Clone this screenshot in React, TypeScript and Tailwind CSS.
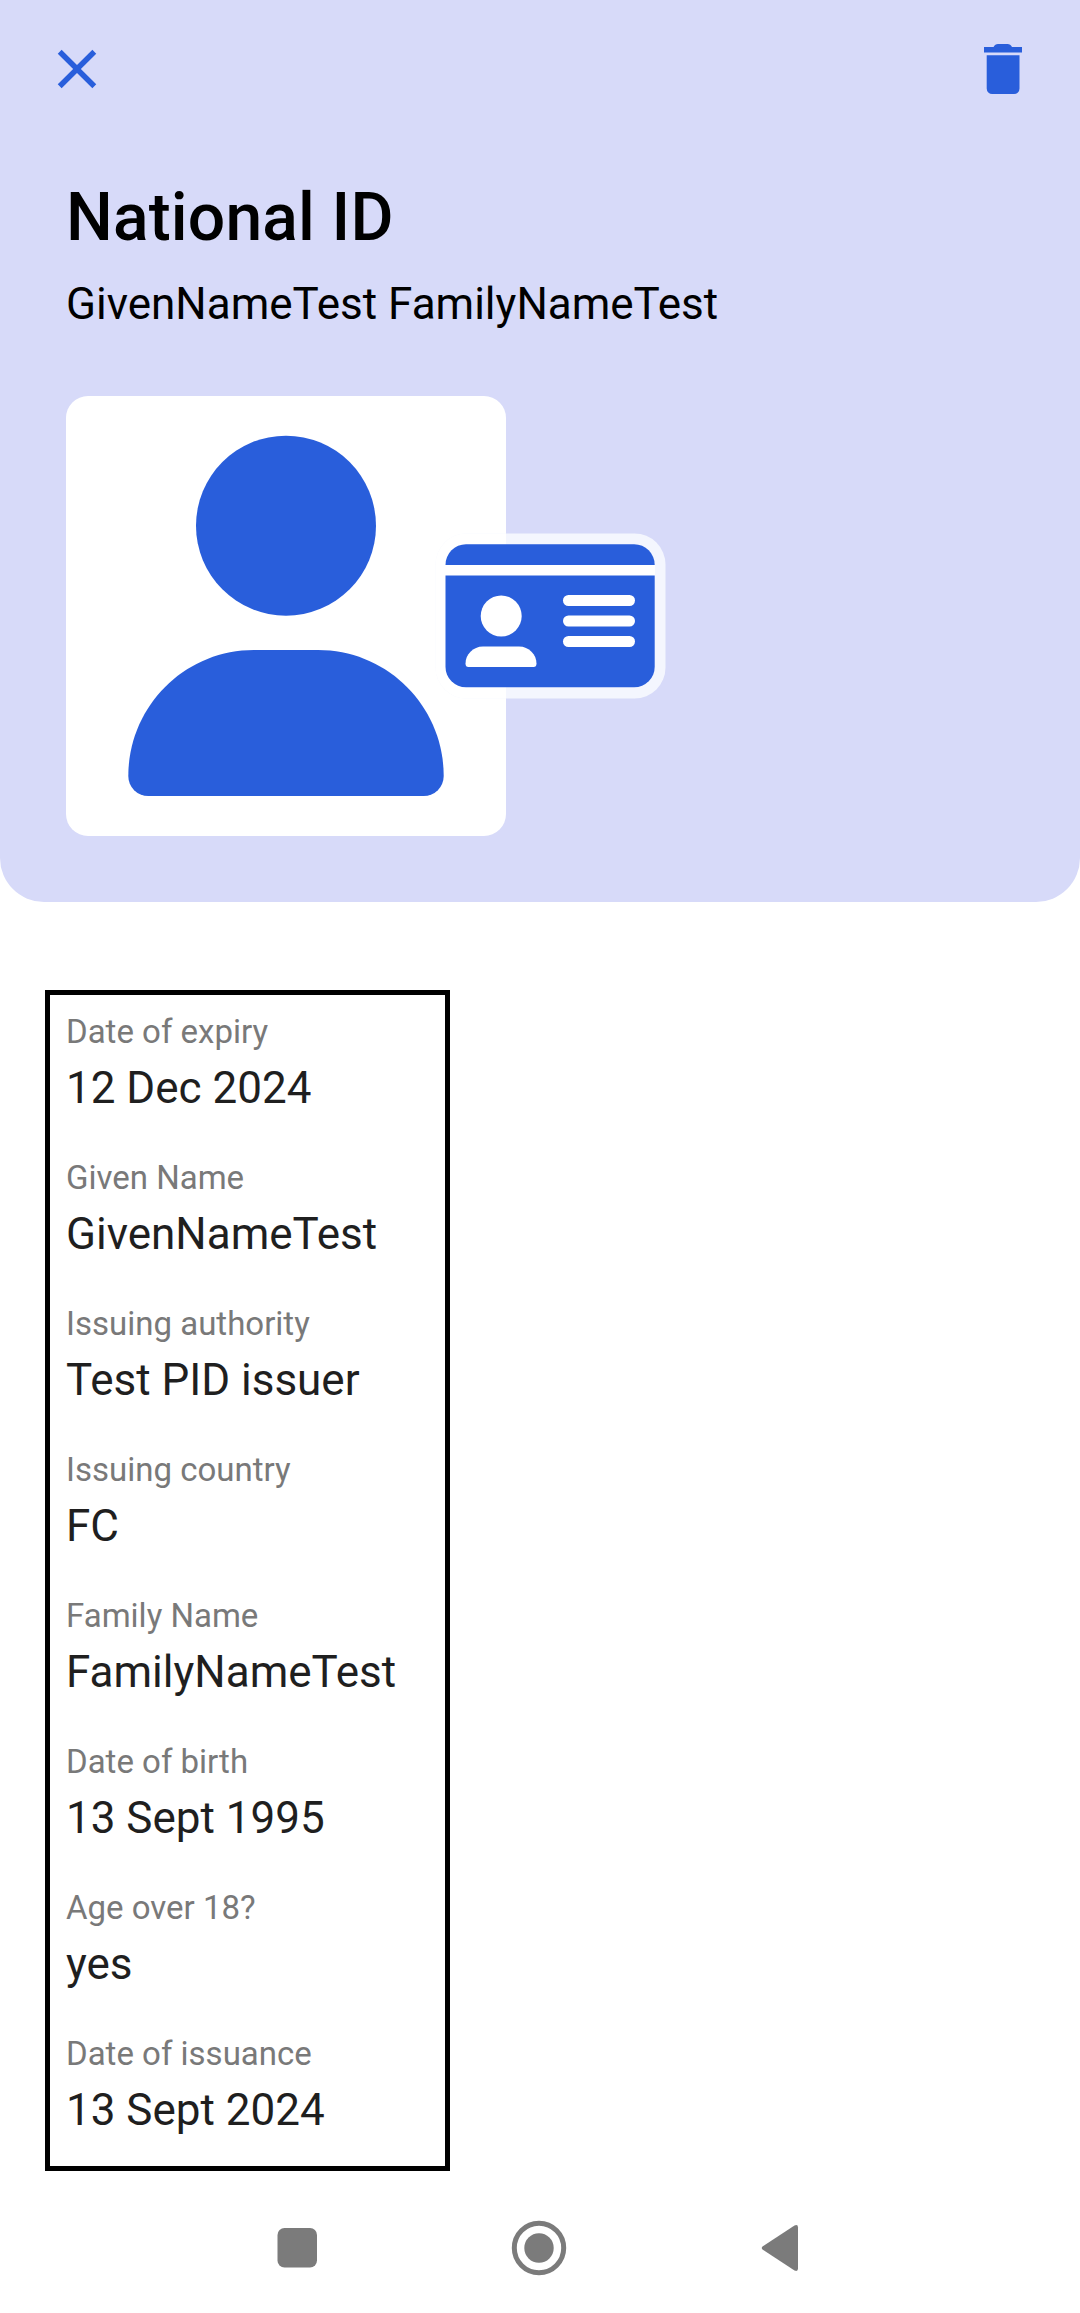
const fields = [
  { label: "Date of expiry", value: "12 Dec 2024" },
  { label: "Given Name", value: "GivenNameTest" },
  { label: "Issuing authority", value: "Test PID issuer" },
  { label: "Issuing country", value: "FC" },
  { label: "Family Name", value: "FamilyNameTest" },
  { label: "Date of birth", value: "13 Sept 1995" },
  { label: "Age over 18?", value: "yes" },
  { label: "Date of issuance", value: "13 Sept 2024" },
];

function CloseIcon() {
  return (
    <svg className="block size-[66px]" viewBox="0 0 24 24" fill="#295edb">
      <path d="M19 6.41 17.59 5 12 10.59 6.41 5 5 6.41 10.59 12 5 17.59 6.41 19 12 13.41 17.59 19 19 17.59 13.41 12z" />
    </svg>
  );
}

function TrashIcon() {
  return (
    <svg className="block size-[66px]" viewBox="0 0 66 66" fill="#295edb">
      <path d="M14 11h9.500c1-2 2.500-3 4.500-3h9.500c2 0 3.500 1 4.500 3H52v5.500H14z" />
      <path d="M16.700 19.200h32.800v33.300a5.500 5.500 0 0 1-5.500 5.500H22.200a5.500 5.500 0 0 1-5.500-5.500z" />
    </svg>
  );
}

function Avatar() {
  return (
    <svg className="block size-[440px]" viewBox="0 0 440 440" fill="#295edb">
      <circle cx="220" cy="129.700" r="90" />
      <path d="M188 254h64c70 0 125.700 57 125.700 126a20 20 0 0 1-20 20H82.300a20 20 0 0 1-20-20c0-69 55.700-126 125.700-126z" />
    </svg>
  );
}

function IdCardIcon() {
  return (
    <svg className="absolute top-[137px] left-[369px] h-[166px] w-[231px]" viewBox="0 0 231 166">
      <rect x="0.500" y="0.500" width="230" height="165" rx="31" fill="#f4f6fe" />
      <path d="M0.500 31.500a31 31 0 0 1 31-31H71v165H31.500a31 31 0 0 1-31-31z" fill="#ffffff" />
      <rect x="10.500" y="11.300" width="209.200" height="143" rx="20.500" fill="#295edb" />
      <rect x="10" y="32" width="210" height="10.500" fill="#ffffff" />
      <g fill="#ffffff">
        <circle cx="66.200" cy="83" r="20.500" />
        <path d="M48 113.500h36c10 0 17.500 8 17.500 17 0 2.500-1 3.500-3 3.500h-65c-2 0-3-1-3-3.500 0-9 7.500-17 17.500-17z" />
        <rect x="128" y="62" width="72" height="11" rx="5.500" />
        <rect x="128" y="82.500" width="72" height="11" rx="5.500" />
        <rect x="128" y="103" width="72" height="11" rx="5.500" />
      </g>
    </svg>
  );
}

function Header() {
  return (
    <header className="h-[902px] rounded-b-[44px] bg-[#d7daf9]">
      <div className="flex justify-between px-[44px] pt-[36px]">
        <button aria-label="Close"><CloseIcon /></button>
        <button aria-label="Delete"><TrashIcon /></button>
      </div>
      <div className="px-[66px] pt-[72px] text-black">
        <h1 className="text-[66px] leading-[88px] font-medium tracking-[0.150px]">National ID</h1>
        <p className="mt-[9px] text-[44px] leading-[66px]">GivenNameTest FamilyNameTest</p>
        <div className="relative mt-[59px] size-[440px] rounded-[22px] bg-white">
          <Avatar />
          <IdCardIcon />
        </div>
      </div>
    </header>
  );
}

function NavBar() {
  return (
    <nav className="mt-auto">
      <svg className="block h-[130px] w-full" viewBox="0 0 1080 130" fill="#7b7b7b">
        <rect x="277.500" y="45" width="39.500" height="39.500" rx="7" />
        <circle cx="539" cy="65" r="24.700" fill="none" stroke="#7b7b7b" strokeWidth="5" />
        <circle cx="539" cy="65" r="14.700" />
        <path d="M762.500 63.500 794.500 42.500q3.500-1.500 3.500 2v41q0 3.500-3.500 2L762.500 66.500q-1.500-1.500 0-3z" />
      </svg>
    </nav>
  );
}

export default function App() {
  return (
    <div className="flex h-[2313px] w-[1080px] flex-col overflow-hidden bg-white font-[Roboto,sans-serif]">
      <Header />
      <main className="mt-[88px] ml-[45px] flex h-[1181px] w-[405px] flex-col gap-[35px] border-[5px] border-black px-4 pt-[15px] whitespace-nowrap">
        {fields.map((field) => (
          <div key={field.label}>
            <div className="text-[33px] leading-[44px] text-[#797979]">{field.label}</div>
            <div className="mt-px text-[44px] leading-[66px] text-[#1f1f1f]">{field.value}</div>
          </div>
        ))}
      </main>
      <NavBar />
    </div>
  );
}
